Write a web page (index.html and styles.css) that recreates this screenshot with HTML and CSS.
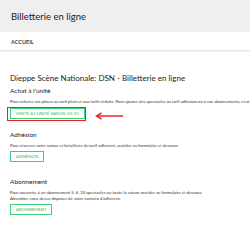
FILE: index.html
```html
<!DOCTYPE html>
<html lang="fr">
<head>
    <meta charset="UTF-8">
    <meta name="viewport" content="width=device-width, initial-scale=1.0">
    <title>Billetterie en ligne</title>
    <link rel="stylesheet" href="styles.css">
</head>
<body>
<div class="top-bar">
    <span class="top-title">Billetterie en ligne</span>
</div>
<div class="nav-bar">
    <span class="nav-link">ACCUEIL</span>
</div>

<div class="content">
    <h1 class="page-title">Dieppe Scène Nationale: DSN - Billetterie en ligne</h1>

    <div class="section">
        <h2 class="section-title">Achat à l'unité</h2>
        <p class="section-text nowrap">Pour acheter vos places au tarif plein et aux tarifs réduits. Pour ajouter des spectacles au tarif adhésion ou à vos abonnements, c'est</p>
        <div class="highlight-row">
            <div class="highlight-box">
                <a class="green-btn">VENTE À L'UNITÉ SAISON 22/23</a>
            </div>
            <svg class="red-arrow" width="28" height="8" viewBox="0 0 28 8">
                <path d="M2 4 H28" stroke="#e8262a" stroke-width="1.5" fill="none"/>
                <path d="M6.5 0.8 L1.5 4 L6.5 7.2" stroke="#e8262a" stroke-width="1.5" fill="none"/>
            </svg>
        </div>
    </div>

    <div class="section section-wide">
        <h2 class="section-title">Adhésion</h2>
        <p class="section-text">Pour réserver votre saison et bénéficier du tarif adhérent, accéder au formulaire ci-dessous.</p>
        <a class="green-btn">ADHÉSION</a>
    </div>

    <div class="section">
        <h2 class="section-title">Abonnement</h2>
        <p class="section-text">Pour souscrire à un abonnement 5, 6 ,10 spectacles ou toute la saison accéder au formulaire ci-dessous.<br>Attention, vous devez disposer de votre numéro d'adhérent.</p>
        <a class="green-btn">ABONNEMENT</a>
    </div>
</div>
</body>
</html>
```

FILE: styles.css
```css
body {
    font-family: 'Lato', 'Liberation Sans', sans-serif;
    margin: 0;
    background-color: #fff;
    color: #333;
    overflow: hidden;
}

.top-bar {
    background-color: #efefef;
    height: 32px;
    display: flex;
    align-items: center;
    padding-left: 11px;
}

.top-title {
    font-size: 9.5px;
    color: #222;
}

.nav-bar {
    height: 18px;
    display: flex;
    align-items: center;
    padding-left: 11px;
    box-shadow: 0 1px 2px rgba(0, 0, 0, 0.15);
}

.nav-link {
    font-size: 5.5px;
    font-weight: bold;
    color: #444;
    padding-top: 2px;
}

.content {
    padding: 23px 10px 0 10px;
}

.page-title {
    font-size: 8px;
    line-height: 10px;
    font-weight: normal;
    margin: 0 0 4px 0;
    color: #222;
}

.section {
    margin-bottom: 11px;
}

.section-wide {
    margin-bottom: 16px;
}

.section-title {
    font-size: 6.5px;
    line-height: 8px;
    font-weight: normal;
    margin: 0 0 4px 0;
    color: #222;
}

.section-text {
    font-size: 4.25px;
    line-height: 5.5px;
    margin: 0 0 3px 0;
    color: #333;
}

.nowrap {
    white-space: nowrap;
    letter-spacing: -0.03px;
}

.green-btn {
    display: block;
    width: fit-content;
    border: 1.5px solid #3ecf7a;
    color: #2fb866;
    font-size: 4.3px;
    line-height: 5px;
    padding: 2px 5px;
}

.highlight-row {
    display: flex;
    align-items: center;
}

.highlight-box {
    display: flex;
    border: 1.5px solid #e8262a;
    padding: 0.5px 0.5px 0.5px 1.5px;
    margin: -2px -2px -2px -3px;
}

.red-arrow {
    margin-left: 11px;
    margin-top: 4px;
}
```
